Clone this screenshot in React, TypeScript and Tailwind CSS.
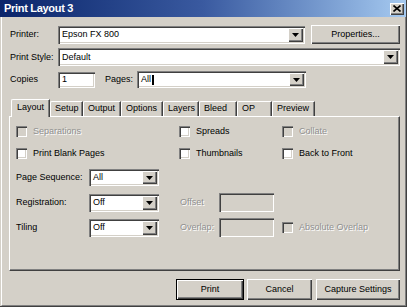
import React from "react";

const raised =
  "bg-[#d4d0c8] shadow-[inset_1px_1px_0_#fff,inset_-1px_-1px_0_#404040,inset_-2px_-2px_0_#808080]";
const sunken =
  "shadow-[inset_1px_1px_0_#808080,inset_2px_2px_0_#404040,inset_-1px_-1px_0_#fff,inset_-2px_-2px_0_#d4d0c8]";
const disabledText = "text-[#909090] [text-shadow:1px_1px_0_#fff]";

function Arrow() {
  return (
    <svg width="7" height="4" viewBox="0 0 7 4">
      <path d="M0 0h7L3.5 4z" fill="#000" />
    </svg>
  );
}

function Combo({
  w,
  h,
  text,
  caret,
}: {
  w: string;
  h: string;
  text: string;
  caret?: boolean;
}) {
  return (
    <div className={`flex bg-white p-[2px] ${sunken} ${w} ${h}`}>
      <div className="flex-1 flex items-center pl-[2px] overflow-hidden whitespace-nowrap">
        {text}
        {caret && <span className="inline-block w-[2px] h-[10px] bg-black ml-px" />}
      </div>
      <div className={`w-[15px] h-full flex items-center justify-center ${raised}`}>
        <Arrow />
      </div>
    </div>
  );
}

function Input({ w, h, text, disabled }: { w: string; h: string; text?: string; disabled?: boolean }) {
  return (
    <div
      className={`flex items-center pl-[4px] ${disabled ? "bg-[#d4d0c8]" : "bg-white"} ${sunken} ${w} ${h}`}
    >
      {text}
    </div>
  );
}

function Check({ label, disabled }: { label: string; disabled?: boolean }) {
  return (
    <div className="flex items-center h-[11px]">
      <div className={`w-[11px] h-[11px] ${disabled ? "bg-[#d4d0c8]" : "bg-white"} ${sunken}`} />
      <span className={`ml-[6px] whitespace-nowrap ${disabled ? disabledText : ""}`}>{label}</span>
    </div>
  );
}

function Button({ w, label, def }: { w: string; label: string; def?: boolean }) {
  if (def) {
    return (
      <div className={`${w} h-[21px] border border-black`}>
        <div className={`w-full h-full flex items-center justify-center ${raised}`}>{label}</div>
      </div>
    );
  }
  return <div className={`${w} h-[21px] flex items-center justify-center ${raised}`}>{label}</div>;
}

const tabs: { label: string; w: string }[] = [
  { label: "Setup", w: "w-[33px]" },
  { label: "Output", w: "w-[38px]" },
  { label: "Options", w: "w-[42px]" },
  { label: "Layers", w: "w-[36px]" },
  { label: "Bleed", w: "w-[38px]" },
  { label: "OP", w: "w-[35px]" },
  { label: "Preview", w: "w-[43px]" },
];

export default function App() {
  return (
    <div className="w-[407px] h-[307px] bg-[#d4d0c8] flex flex-col font-['Liberation_Sans',Arial,sans-serif] text-[9px] leading-none text-black border-b border-r border-[#404040] overflow-hidden">
      {/* Title bar */}
      <div className="h-[17px] shrink-0 flex items-center bg-linear-to-r from-[#0a246a] via-[#3a5aa0] to-[#a6caf0] pl-[4px] pr-[2px]">
        <span className="text-white font-bold text-[11px] tracking-[-0.3px]">Print Layout 3</span>
        <div className={`ml-auto w-[14px] h-[12px] flex items-center justify-center ${raised}`}>
          <svg width="8" height="7" viewBox="0 0 8 7">
            <path d="M0.5 0.5L7.5 6.5M7.5 0.5L0.5 6.5" stroke="#000" strokeWidth="1.6" />
          </svg>
        </div>
      </div>

      {/* Body */}
      <div className="flex-1 ml-px border-l border-white border-b border-b-[#808080] border-r border-r-[#808080] pl-[7px] flex flex-col">
        {/* Printer row */}
        <div className="mt-[8px] flex items-center pl-px h-[19px]">
          <span className="w-[48px]">Printer:</span>
          <Combo w="w-[247px]" h="h-[18px]" text="Epson FX 800" />
          <div className="ml-[6px]">
            <div className={`w-[89px] h-[19px] flex items-center justify-center ${raised}`}>Properties...</div>
          </div>
        </div>
        {/* Print style */}
        <div className="mt-[4px] flex items-center pl-px h-[18px]">
          <span className="w-[48px]">Print Style:</span>
          <Combo w="w-[342px]" h="h-[18px]" text="Default" />
        </div>
        {/* Copies / Pages */}
        <div className="mt-[5px] flex items-center pl-px h-[17px]">
          <span className="w-[48px]">Copies</span>
          <Input w="w-[37px]" h="h-[16px]" text="1" />
          <span className="ml-[10px] w-[32px]">Pages:</span>
          <Combo w="w-[169px]" h="h-[17px]" text="All" caret />
        </div>

        {/* Tabs */}
        <div className="mt-[10px] flex items-end h-[18px] pl-[2px] relative z-10">
          <div className="w-[39px] h-[18px] mb-[-1px] bg-[#d4d0c8] border-l border-t border-white rounded-tl-[2px] shadow-[inset_-1px_0_0_#808080] border-r border-r-[#404040] flex items-center justify-center pb-[2px]">
            Layout
          </div>
          {tabs.map((t) => (
            <div
              key={t.label}
              className={`${t.w} h-[15px] border-l border-t border-white rounded-tl-[2px] border-r border-r-[#404040] shadow-[inset_-1px_0_0_#808080] flex items-center pl-[4px] pb-[1px]`}
            >
              {t.label}
            </div>
          ))}
        </div>

        {/* Pane */}
        <div className="w-[391px] h-[155px] border-l border-t border-white border-r border-b border-r-[#404040] border-b-[#404040] shadow-[inset_-1px_-1px_0_#808080] pl-[6px] pt-[9px] flex flex-col">
          <div className="flex h-[11px]">
            <div className="w-[163px]">
              <Check label="Separations" disabled />
            </div>
            <div className="w-[103px]">
              <Check label="Spreads" />
            </div>
            <Check label="Collate" disabled />
          </div>
          <div className="flex h-[11px] mt-[11px]">
            <div className="w-[163px]">
              <Check label="Print Blank Pages" />
            </div>
            <div className="w-[103px]">
              <Check label="Thumbnails" />
            </div>
            <Check label="Back to Front" />
          </div>
          <div className="flex items-center mt-[10px] h-[17px]">
            <span className="w-[73px]">Page Sequence:</span>
            <Combo w="w-[70px]" h="h-[17px]" text="All" />
          </div>
          <div className="flex items-center mt-[7px] h-[19px]">
            <span className="w-[73px]">Registration:</span>
            <Combo w="w-[70px]" h="h-[18px]" text="Off" />
            <span className={`ml-[21px] w-[39px] ${disabledText}`}>Offset</span>
            <Input w="w-[55px]" h="h-[19px]" disabled />
          </div>
          <div className="flex items-center mt-[6px] h-[19px]">
            <span className="w-[73px]">Tiling</span>
            <Combo w="w-[70px]" h="h-[18px]" text="Off" />
            <span className={`ml-[21px] w-[39px] ${disabledText}`}>Overlap:</span>
            <Input w="w-[55px]" h="h-[19px]" disabled />
            <div className="ml-[8px]">
              <Check label="Absolute Overlap" disabled />
            </div>
          </div>
        </div>

        {/* Buttons */}
        <div className="w-[391px] mt-[8px] flex justify-end">
          <Button w="w-[68px]" label="Print" def />
          <div className="ml-[3px]">
            <Button w="w-[65px]" label="Cancel" />
          </div>
          <div className="ml-[4px]">
            <Button w="w-[84px]" label="Capture Settings" />
          </div>
        </div>
      </div>
    </div>
  );
}
